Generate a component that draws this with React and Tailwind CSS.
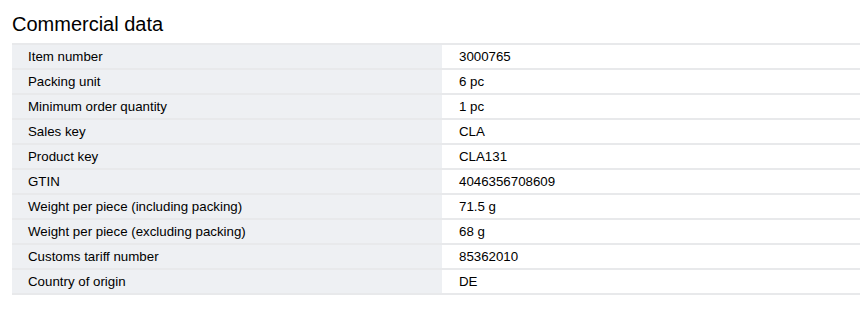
const rows = [
  ['Item number', '3000765'],
  ['Packing unit', '6 pc'],
  ['Minimum order quantity', '1 pc'],
  ['Sales key', 'CLA'],
  ['Product key', 'CLA131'],
  ['GTIN', '4046356708609'],
  ['Weight per piece (including packing)', '71.5 g'],
  ['Weight per piece (excluding packing)', '68 g'],
  ['Customs tariff number', '85362010'],
  ['Country of origin', 'DE'],
];

export default function App() {
  return (
    <div
      className="min-h-[309px] bg-white pl-[12px] pt-[10px] text-black"
      style={{ fontFamily: '"Liberation Sans", Arial, sans-serif' }}
    >
      <h2 className="mb-[5px] text-[20px] leading-[28px]">Commercial data</h2>
      <div className="border-b-2 border-[#e8e9eb] text-[13.3px]">
        {rows.map(([label, value]) => (
          <div
            key={label}
            className="grid grid-cols-[430px_1fr] border-t-2 border-[#e8e9eb]"
          >
            <div className="bg-[#eef0f3] pl-4 leading-[23px]">{label}</div>
            <div className="pl-[17px] leading-[23px]">{value}</div>
          </div>
        ))}
      </div>
    </div>
  );
}
